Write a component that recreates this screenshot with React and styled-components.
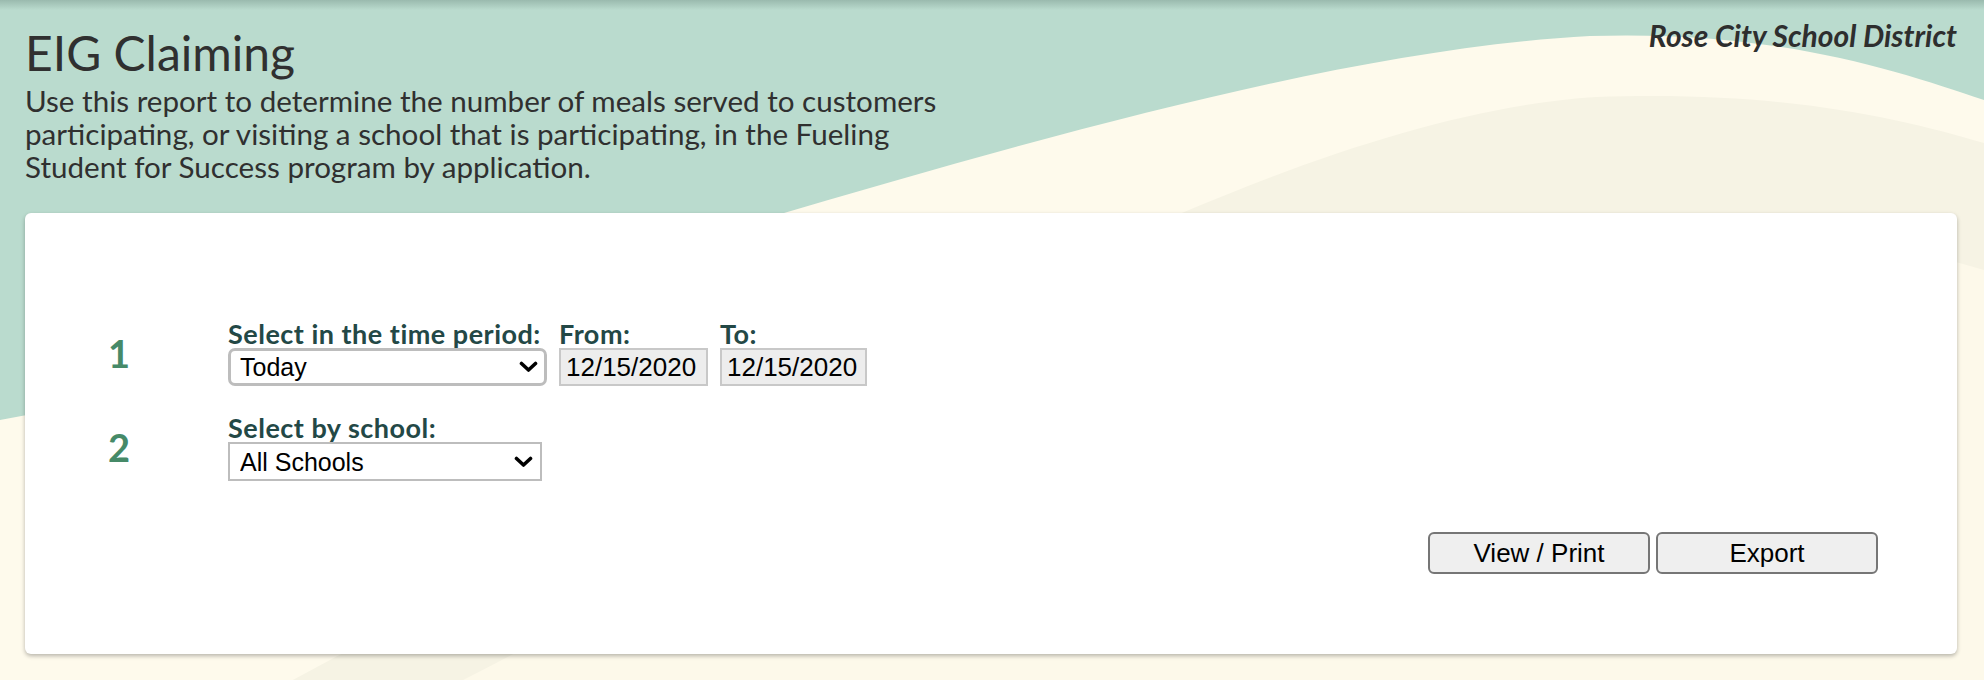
import React from 'react';
import styled, { createGlobalStyle } from 'styled-components';

const GlobalStyle = createGlobalStyle`
    * { box-sizing : border-box; }
    html, body {
        margin : 0;
        padding : 0;
        background-color : #FEFAEC;
    }
`;

const Page = styled.div`
    position : relative;
    width : 100%;
    height : 680px;
    overflow : hidden;
    background-color : #BADBCE;
    font-family : Lato, "Noto Sans", sans-serif;
    color : #333;
`;

const Backdrop = styled.svg`
    position : absolute;
    top : 0;
    left : 0;
    width : 100%;
    height : 100%;
    z-index : 0;
`;

const TopShade = styled.div`
    position : absolute;
    top : 0;
    left : 0;
    right : 0;
    height : 10px;
    background : linear-gradient(to bottom, rgba(80,110,100,0.3), rgba(80,110,100,0));
    z-index : 0;
`;

const Content = styled.div`
    position : relative;
    z-index : 1;
    padding : 25px 27px 0 25px;
`;

const Header = styled.header`
    display : flex;
    justify-content : space-between;
    align-items : flex-start;
`;

const Intro = styled.div`
    display : flex;
    flex-direction : column;
`;

const Title = styled.h1`
    margin : 0;
    font-size : 48px;
    line-height : 56px;
    font-weight : 400;
    color : #303030;
`;

const Description = styled.p`
    margin : 3px 0 0;
    font-size : 29.6px;
    line-height : 33px;
    color : #303030;
`;

const District = styled.div`
    margin-top : -7px;
    font-size : 30px;
    line-height : 34px;
    font-weight : 700;
    font-style : italic;
    color : #2e2e2e;
`;

const Card = styled.section`
    margin-top : 30px;
    background-color : #fff;
    border-radius : 6px;
    box-shadow : 0 2px 4px rgba(0,0,0,0.28);
    padding : 106px 79px 80px 83px;
    display : flex;
    flex-direction : column;
`;

const Steps = styled.div`
    display : flex;
    flex-direction : column;
    gap : 27px;
`;

const Step = styled.div`
    display : flex;
    align-items : center;
`;

const StepNumber = styled.div`
    width : 120px;
    font-size : 38px;
    line-height : 40px;
    font-weight : 700;
    color : #468A68;
`;

const Fields = styled.div`
    display : flex;
    gap : 12px;
`;

const Field = styled.label`
    display : flex;
    flex-direction : column;
`;

const Label = styled.span`
    font-size : 27px;
    line-height : 29px;
    letter-spacing : 0.5px;
    font-weight : 700;
    color : #234846;
    white-space : nowrap;
`;

const SelectWrap = styled.div`
    position : relative;
    width : ${(props)=>props.width}px;
    svg {
        position : absolute;
        right : 9px;
        top : 50%;
        transform : translateY(-50%);
        pointer-events : none;
    }
`;

const Select = styled.select`
    appearance : none;
    width : 100%;
    height : ${(props)=>(props.rounded ? "38px" : "39px")};
    border : ${(props)=>(props.rounded ? "3px" : "2px")} solid #BDBDBD;
    border-radius : ${(props)=>(props.rounded ? "7px" : "0")};
    background-color : #fff;
    padding : 0 30px 0 ${(props)=>(props.rounded ? "9px" : "10px")};
    font-family : "Liberation Sans", Arial, sans-serif;
    font-size : 25px;
    color : #000;
    outline : none;
`;

const DateInput = styled.input`
    width : ${(props)=>props.width}px;
    height : 38px;
    border : 2px solid #C8C8C8;
    background-color : #EDEDED;
    padding : 0 0 0 5px;
    font-family : "Liberation Sans", Arial, sans-serif;
    font-size : 26px;
    color : #000;
    outline : none;
`;

const Actions = styled.div`
    margin-top : 51px;
    display : flex;
    justify-content : flex-end;
    gap : 6px;
`;

const ActionBtn = styled.button`
    width : 222px;
    height : 42px;
    border : 2px solid #767676;
    border-radius : 6px;
    background-color : #EFEFEF;
    font-family : "Liberation Sans", Arial, sans-serif;
    font-size : 26px;
    color : #000;
    cursor : pointer;
    padding : 0;
`;

const Chevron = () => (
    <svg width="19" height="12" viewBox="0 0 19 12">
        <polyline points="2.5,2.5 9.5,9 16.5,2.5" fill="none" stroke="#000" strokeWidth="3.6" strokeLinecap="round" strokeLinejoin="round" />
    </svg>
);

const App = ()=>{
    return(
        <>
            <GlobalStyle />
            <Page>
                <Backdrop viewBox="0 0 1984 680" preserveAspectRatio="none">
                    <path d="M0,420 C500,330 1150,60 1590,36 C1780,30 1900,72 1984,100 L1984,680 L0,680 Z" fill="#FEFAEC" />
                    <path d="M0,820 C450,640 1150,125 1596,97 C1780,90 1900,118 1984,143 L1984,680 L0,680 Z" fill="#F6F3E4" />
                    <path d="M0,900 C500,700 1150,250 1600,225 C1780,218 1900,245 1984,270 L1984,680 L0,680 Z" fill="#FDF9EA" />
                </Backdrop>
                <TopShade />
                <Content>
                    <Header>
                        <Intro>
                            <Title>EIG Claiming</Title>
                            <Description>
                                Use this report to determine the number of meals served to customers<br />
                                participating, or visiting a school that is participating, in the Fueling<br />
                                Student for Success program by application.
                            </Description>
                        </Intro>
                        <District>Rose City School District</District>
                    </Header>
                    <Card>
                        <Steps>
                            <Step>
                                <StepNumber>1</StepNumber>
                                <Fields>
                                    <Field>
                                        <Label>Select in the time period:</Label>
                                        <SelectWrap width={319}>
                                            <Select rounded defaultValue="today">
                                                <option value="today">Today</option>
                                                <option value="week">This Week</option>
                                                <option value="month">This Month</option>
                                            </Select>
                                            <Chevron />
                                        </SelectWrap>
                                    </Field>
                                    <Field>
                                        <Label>From:</Label>
                                        <DateInput width={149} readOnly value="12/15/2020" />
                                    </Field>
                                    <Field>
                                        <Label>To:</Label>
                                        <DateInput width={147} readOnly value="12/15/2020" />
                                    </Field>
                                </Fields>
                            </Step>
                            <Step>
                                <StepNumber>2</StepNumber>
                                <Fields>
                                    <Field>
                                        <Label>Select by school:</Label>
                                        <SelectWrap width={314}>
                                            <Select defaultValue="all">
                                                <option value="all">All Schools</option>
                                            </Select>
                                            <Chevron />
                                        </SelectWrap>
                                    </Field>
                                </Fields>
                            </Step>
                        </Steps>
                        <Actions>
                            <ActionBtn>View / Print</ActionBtn>
                            <ActionBtn>Export</ActionBtn>
                        </Actions>
                    </Card>
                </Content>
            </Page>
        </>
    );
}

export default App;
